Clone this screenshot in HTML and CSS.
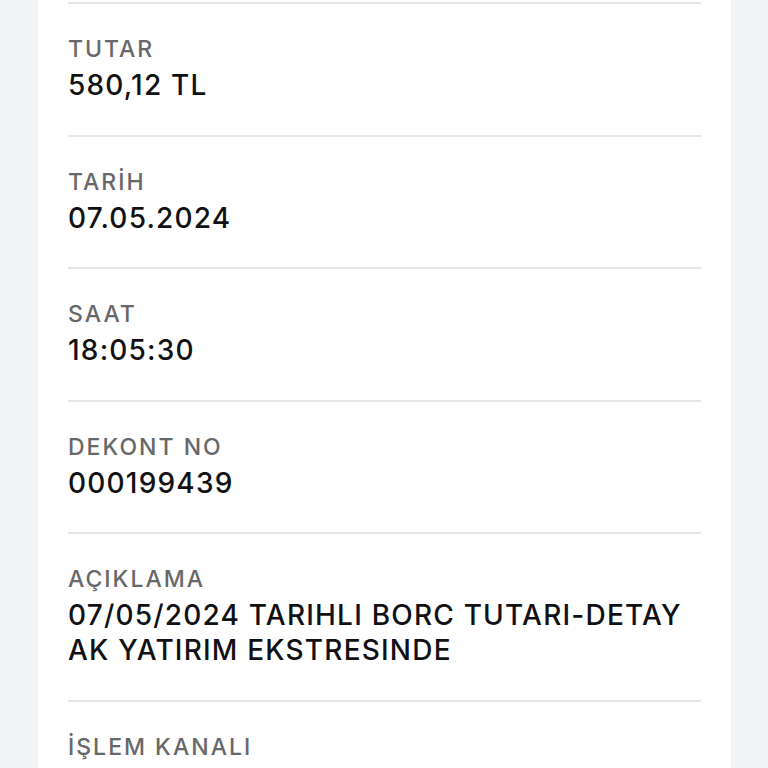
FILE: index.html
```html
<!DOCTYPE html>
<html lang="tr">
<head>
<meta charset="utf-8">
<title>İşlem Detayı</title>
<link rel="stylesheet" href="styles.css">
</head>
<body>
<main class="sheet">
  <section class="details">
    <div class="row">
      <div class="label">TUTAR</div>
      <div class="value">580,12 TL</div>
    </div>
    <div class="row">
      <div class="label">TARİH</div>
      <div class="value">07.05.2024</div>
    </div>
    <div class="row">
      <div class="label">SAAT</div>
      <div class="value">18:05:30</div>
    </div>
    <div class="row">
      <div class="label">DEKONT NO</div>
      <div class="value">000199439</div>
    </div>
    <div class="row">
      <div class="label">AÇIKLAMA</div>
      <div class="value">07/05/2024 TARIHLI BORC TUTARI-DETAY<br>AK YATIRIM EKSTRESINDE</div>
    </div>
    <div class="row">
      <div class="label">İŞLEM KANALI</div>
    </div>
  </section>
</main>
</body>
</html>
```

FILE: styles.css
```css
html, body {
  margin: 0;
  padding: 0;
  background: #f3f4f6;
  height: 100%;
  overflow: hidden;
}

body {
  font-family: Inter, "Open Sans", "Liberation Sans", sans-serif;
}

.sheet {
  margin-left: 38px;
  width: 693px;
  min-height: 100%;
  background: #ffffff;
  padding: 2px 30px 0;
  box-sizing: border-box;
}

.row {
  border-top: 2px solid #e6e6e8;
  padding: 31px 0 31.5px;
}

.label {
  font-size: 23px;
  line-height: 28px;
  font-weight: 500;
  letter-spacing: 2px;
  color: #68686a;
  margin-bottom: 5px;
}

.value {
  font-size: 28px;
  line-height: 35px;
  font-weight: 500;
  letter-spacing: 1.2px;
  color: #111113;
}
```
